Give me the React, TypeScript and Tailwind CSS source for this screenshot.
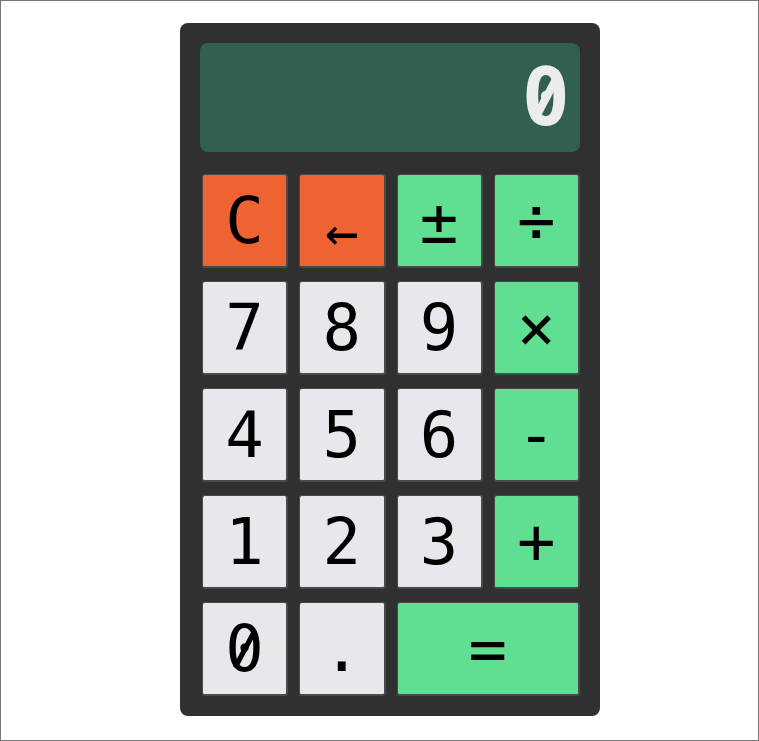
import React from "react";

type Key = { label: string; kind: "op" | "fn" | "num"; wide?: boolean };

const keys: Key[] = [
  { label: "C", kind: "fn" },
  { label: "←", kind: "fn" },
  { label: "±", kind: "op" },
  { label: "÷", kind: "op" },
  { label: "7", kind: "num" },
  { label: "8", kind: "num" },
  { label: "9", kind: "num" },
  { label: "×", kind: "op" },
  { label: "4", kind: "num" },
  { label: "5", kind: "num" },
  { label: "6", kind: "num" },
  { label: "-", kind: "op" },
  { label: "1", kind: "num" },
  { label: "2", kind: "num" },
  { label: "3", kind: "num" },
  { label: "+", kind: "op" },
  { label: "0", kind: "num" },
  { label: ".", kind: "num" },
  { label: "=", kind: "op", wide: true },
];

const colors = {
  fn: "bg-[#ef6232]",
  op: "bg-[#60de91]",
  num: "bg-[#e8e7ec]",
};

// slashed zero: the installed mono font only has a dotted one
const Zero = ({ big }: { big?: boolean }) => (
  <span className="relative inline-block">
    0
    <span
      className={`absolute left-1/2 top-1/2 -translate-x-1/2 -translate-y-1/2 rotate-[28deg] bg-current ${
        big ? "h-[50px] w-[8px]" : "h-[42px] w-[5px]"
      }`}
    />
  </span>
);

const Label = ({ label }: { label: string }) => {
  if (label === "←") return <span className="translate-y-[11px] text-[56px]">←</span>;
  if (label === "0") return <Zero />;
  return <>{label}</>;
};

const App = () => {
  return (
    <div className="h-[741px] w-full border border-[#777] bg-white pl-[179px] pt-[22px] font-['DejaVu_Sans_Mono',monospace]">
      <div className="w-[420px] rounded-lg bg-[#303030] p-5">
        <div className="flex h-[109px] items-center justify-end rounded-lg bg-[#31604f] pr-[10px] text-[80px] font-bold leading-none text-[#ececec]">
          <Zero big />
        </div>

        <div className="mt-[22px] grid grid-cols-4 gap-x-[11px] gap-y-[13px] pl-[2px]">
          {keys.map((k) => (
            <button
              key={k.label}
              className={`flex h-[94px] items-center justify-center rounded-[3px] border-2 border-t border-l border-[#4a4a4a] text-[64px] leading-none text-black ${colors[k.kind]} ${k.wide ? "col-span-2" : ""}`}
            >
              <Label label={k.label} />
            </button>
          ))}
        </div>
      </div>
    </div>
  );
};

export default App;
